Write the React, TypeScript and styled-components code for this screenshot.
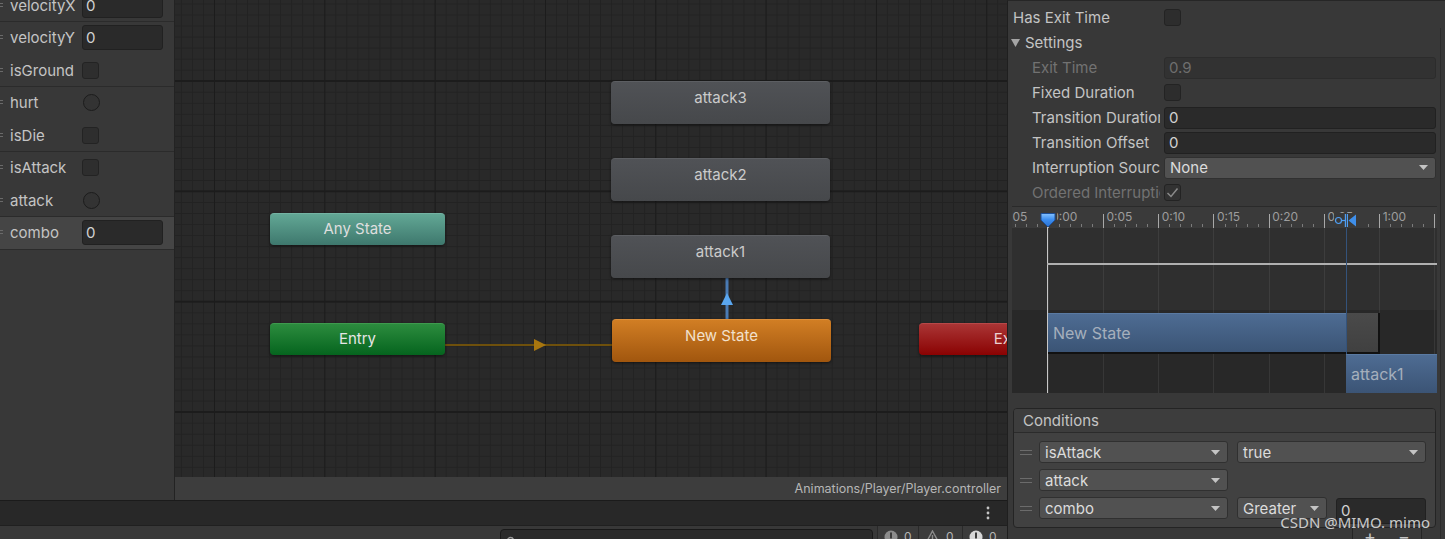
import React from 'react';
import styled, { createGlobalStyle } from 'styled-components';

const GlobalStyle = createGlobalStyle`
  html, body { margin: 0; padding: 0; background: #282828; overflow: hidden; }
  body { font-family: Inter, "Noto Sans", sans-serif; }
  * { box-sizing: border-box; }
`;

const Root = styled.div`
  display: flex;
  width: 1445px;
  height: 539px;
  overflow: hidden;
  font-family: Inter, "Noto Sans", sans-serif;
  font-size: 15px;
  color: #c4c4c4;
`;

const MainColumn = styled.div`
  display: flex;
  flex-direction: column;
  width: 1007px;
  flex-shrink: 0;
`;

const Workspace = styled.div`
  display: flex;
  height: 500px;
  flex-shrink: 0;
`;

/* ---------- parameters panel ---------- */
const ParamPanel = styled.div`
  width: 175px;
  flex-shrink: 0;
  background: #383838;
  border-right: 1px solid #232323;
  overflow: hidden;
`;

const ParamList = styled.div`
  margin-top: -10.5px;
`;

const ParamRow = styled.div<{ $sep?: boolean; $selected?: boolean }>`
  display: flex;
  align-items: center;
  height: 32.5px;
  border-bottom: 1px solid ${(p) => (p.$sep ? '#2b2b2b' : 'transparent')};
  background: ${(p) => (p.$selected ? '#454545' : 'transparent')};
`;

const RowGrip = styled.span`
  width: 3px;
  height: 4px;
  align-self: flex-start;
  margin-top: 13px;
  margin-right: 7px;
  border-top: 1px solid #6a6a6a;
  border-bottom: 1px solid #6a6a6a;
  flex-shrink: 0;
`;

const ParamLabel = styled.span`
  width: 72px;
  flex-shrink: 0;
  white-space: nowrap;
  overflow: hidden;
  color: #c4c4c4;
`;

const ParamField = styled.div`
  width: 81px;
  height: 25px;
  background: #2a2a2a;
  border: 1px solid #212121;
  border-radius: 3px;
  padding-left: 3px;
  display: flex;
  align-items: center;
  color: #d2d2d2;
`;

const ParamCheck = styled.div`
  width: 17px;
  height: 17px;
  background: #2e2e2e;
  border: 1px solid #232323;
  border-radius: 3px;
`;

const ParamTrigger = styled.div`
  width: 17px;
  height: 17px;
  margin-left: 1px;
  border-radius: 50%;
  background: #333333;
  border: 1px solid #1c1c1c;
`;

/* ---------- graph ---------- */
const GraphArea = styled.div`
  flex: 1;
  display: flex;
  flex-direction: column;
  min-width: 0;
`;

const GraphCanvas = styled.div`
  position: relative;
  flex: 1;
  overflow: hidden;
  background-color: #292929;
  background-image:
    linear-gradient(to right, #1c1c1c 0, #1c1c1c 1px, transparent 1px),
    linear-gradient(to bottom, #1c1c1c 0, #1c1c1c 2px, transparent 2px),
    linear-gradient(to right, #222222 0, #222222 1px, transparent 1px),
    linear-gradient(to bottom, #222222 0, #222222 1px, transparent 1px);
  background-size: 110.33px 110.33px, 110.33px 110.33px, 11.033px 11.033px, 11.033px 11.033px;
  background-position: 39px 80px, 39px 80px, 5.9px 3.5px, 5.9px 3.5px;
`;

const GraphLinks = styled.svg`
  position: absolute;
  left: 0;
  top: 0;
  pointer-events: none;
`;

type Skin = 'any' | 'entry' | 'plain' | 'default' | 'exit';
const skins: Record<Skin, { top: string; bottom: string; text: string; edge: string }> = {
  any: { top: '#62a795', bottom: '#3e786d', text: '#dedede', edge: '#74b3a3' },
  entry: { top: '#2c8c3e', bottom: '#05641e', text: '#e6e6e6', edge: '#3e9a4e' },
  plain: { top: '#505256', bottom: '#46484b', text: '#cbcbcb', edge: '#5c5e62' },
  default: { top: '#d17e24', bottom: '#a1560e', text: '#f2e0cc', edge: '#dc8e3a' },
  exit: { top: '#aa3535', bottom: '#8a0202', text: '#ecd0d0', edge: '#b84848' },
};

const StateNode = styled.div<{ $skin: Skin; $x: number; $y: number; $w: number; $h: number }>`
  position: absolute;
  left: ${(p) => p.$x}px;
  top: ${(p) => p.$y}px;
  width: ${(p) => p.$w}px;
  height: ${(p) => p.$h}px;
  padding-top: ${(p) => (p.$h > 36 ? 6 : 5)}px;
  line-height: 20px;
  text-align: center;
  font-size: 15px;
  white-space: nowrap;
  border-radius: 4px;
  color: ${(p) => skins[p.$skin].text};
  background: linear-gradient(${(p) => skins[p.$skin].top}, ${(p) => skins[p.$skin].bottom});
  border-top: 1px solid ${(p) => skins[p.$skin].edge};
  box-shadow: 0 1px 3px rgba(0, 0, 0, 0.55);
`;

const GraphFooter = styled.div`
  height: 23px;
  flex-shrink: 0;
  background: #3d3d3d;
  display: flex;
  align-items: center;
  justify-content: flex-end;
  padding-right: 6px;
  font-size: 12.5px;
  color: #b6b6b6;
`;

/* ---------- console strips ---------- */
const ConsoleToolbar = styled.div`
  height: 25px;
  flex-shrink: 0;
  background: #282828;
  border-top: 1px solid #1b1b1b;
  display: flex;
  align-items: center;
  justify-content: flex-end;
  padding-right: 17px;
`;

const ConsoleBar = styled.div`
  flex: 1;
  background: #383838;
  border-top: 1px solid #202020;
  display: flex;
  justify-content: flex-end;
  overflow: hidden;
`;

const SearchField = styled.div`
  width: 373px;
  height: 22px;
  margin-top: 3px;
  margin-right: 4px;
  background: #2a2a2a;
  border: 1px solid #191919;
  border-radius: 4px;
  padding: 2px 0 0 5px;
`;

const Counter = styled.div<{ $w: number }>`
  width: ${(p) => p.$w}px;
  display: flex;
  align-items: flex-start;
  gap: 6px;
  padding: 4px 0 0 6px;
  border-left: 1px solid #2a2a2a;
  background: #3b3b3b;
  font-size: 12px;
  line-height: 14px;
  color: #b4b4b4;
`;

/* ---------- inspector ---------- */
const Inspector = styled.div`
  position: relative;
  flex: 1;
  display: flex;
  background: #383838;
  border-left: 1px solid #1f1f1f;
  border-top: 1px solid #262626;
  overflow: hidden;
`;

const InspectorContent = styled.div`
  width: 428px;
  flex-shrink: 0;
  padding: 4px 0 0 5px;
  display: flex;
  flex-direction: column;
`;

const ScrollTrack = styled.div`
  flex: 1;
  padding: 27px 0 0 4px;
`;

const ScrollLine = styled.div`
  width: 1px;
  height: 100%;
  background: #2c2c2c;
`;

const PropRow = styled.div<{ $indent?: boolean }>`
  display: flex;
  align-items: center;
  height: 25px;
  flex-shrink: 0;
  padding-left: ${(p) => (p.$indent ? 19 : 0)}px;
`;

const PropLabel = styled.div<{ $indent?: boolean; $disabled?: boolean }>`
  width: ${(p) => (p.$indent ? 128 : 147)}px;
  margin-right: 4px;
  flex-shrink: 0;
  white-space: nowrap;
  overflow: hidden;
  color: ${(p) => (p.$disabled ? '#727272' : '#c4c4c4')};
`;

const Foldout = styled.div`
  display: flex;
  align-items: center;
  gap: 5px;
  margin-left: -2px;
  color: #c4c4c4;
`;

const TextField = styled.div<{ $disabled?: boolean }>`
  flex: 1;
  height: 22px;
  display: flex;
  align-items: center;
  padding-left: 4px;
  border-radius: 3px;
  background: ${(p) => (p.$disabled ? '#323232' : '#2a2a2a')};
  border: 1px solid ${(p) => (p.$disabled ? '#2c2c2c' : '#212121')};
  color: ${(p) => (p.$disabled ? '#6e6e6e' : '#d2d2d2')};
`;

const CheckBox = styled.div<{ $disabled?: boolean }>`
  width: 17px;
  height: 17px;
  display: flex;
  align-items: center;
  justify-content: center;
  border-radius: 3px;
  background: ${(p) => (p.$disabled ? '#323232' : '#2d2d2d')};
  border: 1px solid #232323;
`;

const Dropdown = styled.div<{ $w?: number }>`
  ${(p) => (p.$w ? `width: ${p.$w}px;` : 'flex: 1;')}
  flex-shrink: 0;
  height: 22px;
  display: flex;
  align-items: center;
  justify-content: space-between;
  padding: 0 7px 0 5px;
  border-radius: 3px;
  background: #515151;
  border: 1px solid #303030;
  color: #dcdcdc;
`;

/* ---------- timeline ---------- */
const Timeline = styled.div`
  position: relative;
  height: 187px;
  margin: 1px -1px 0 -1px;
  border-top: 1px solid #2a2a2a;
  display: flex;
  flex-direction: column;
  overflow: hidden;
  flex-shrink: 0;
`;

const RulerBand = styled.div`
  height: 21px;
  background: #3a3a3a;
`;

const UpperTrack = styled.div`
  height: 82px;
  background: #2f2f2f;
`;

const LowerTrack = styled.div`
  flex: 1;
  background: #282828;
`;

const TimeOverlay = styled.svg`
  position: absolute;
  left: 0;
  top: 0;
`;

const RulerLabel = styled.span<{ $x: number }>`
  position: absolute;
  left: ${(p) => p.$x}px;
  top: 2px;
  font-size: 12px;
  line-height: 16px;
  color: #9d9d9d;
  white-space: nowrap;
`;

const MarkerSvg = styled.svg<{ $x: number; $y: number }>`
  position: absolute;
  left: ${(p) => p.$x}px;
  top: ${(p) => p.$y}px;
`;

const TimeLine = styled.div<{ $x: number; $y: number; $w: number; $h: number; $c: string }>`
  position: absolute;
  left: ${(p) => p.$x}px;
  top: ${(p) => p.$y}px;
  width: ${(p) => p.$w}px;
  height: ${(p) => p.$h}px;
  background: ${(p) => p.$c};
`;

const ClipBar = styled.div<{ $x: number; $y: number; $w: number }>`
  position: absolute;
  left: ${(p) => p.$x}px;
  top: ${(p) => p.$y}px;
  width: ${(p) => p.$w}px;
  height: 39px;
  display: flex;
  align-items: center;
  padding-left: 5px;
  font-size: 16px;
  color: #a5afbc;
  white-space: nowrap;
  background: linear-gradient(#4e6c93, #3b5475);
  border-top: 1px solid #5a7aa2;
`;

const BlendTail = styled.div<{ $x: number; $y: number; $w: number }>`
  position: absolute;
  left: ${(p) => p.$x}px;
  top: ${(p) => p.$y}px;
  width: ${(p) => p.$w}px;
  height: 41px;
  background: linear-gradient(#4a4a4a, #404040);
  border-right: 2px solid #111111;
  border-bottom: 2px solid #111111;
`;

/* ---------- conditions ---------- */
const ConditionsBlock = styled.div`
  margin-top: 15px;
  display: flex;
  flex-direction: column;
`;

const CondBox = styled.div`
  border: 1px solid #242424;
  border-radius: 4px;
  background: #414141;
  overflow: hidden;
`;

const CondHeader = styled.div`
  height: 24px;
  display: flex;
  align-items: center;
  padding-left: 9px;
  background: #3d3d3d;
  border-bottom: 1px solid #2b2b2b;
  color: #c4c4c4;
`;

const CondBody = styled.div`
  padding: 5px 9px 5px 6px;
  display: flex;
  flex-direction: column;
`;

const CondRow = styled.div`
  display: flex;
  align-items: center;
  height: 28px;
`;

const CondGrip = styled.span`
  width: 12px;
  height: 5px;
  margin-right: 7px;
  border-top: 1px solid #6b6b6b;
  border-bottom: 1px solid #6b6b6b;
  flex-shrink: 0;
`;

const CondGap = styled.span`
  width: 9px;
  flex-shrink: 0;
`;

const NumberField = styled.div`
  width: 90px;
  height: 26px;
  align-self: flex-start;
  margin-top: 4px;
  background: #2a2a2a;
  border: 1px solid #212121;
  border-radius: 3px;
  padding: 2px 0 0 4px;
  line-height: 20px;
  color: #d2d2d2;
`;

const ListFooter = styled.div`
  align-self: flex-end;
  width: 70px;
  height: 14px;
  margin-right: 14px;
  display: flex;
  justify-content: space-around;
  border: 1px solid #242424;
  border-top: none;
  background: #3a3a3a;
  font-size: 18px;
  line-height: 14px;
  color: #c4c4c4;
  overflow: hidden;
  padding-top: 2px;
`;

const Watermark = styled.div`
  position: absolute;
  right: 15px;
  bottom: 8px;
  font-family: "Noto Sans", "Noto Sans CJK SC", sans-serif;
  font-size: 15px;
  line-height: 18px;
  color: rgba(225, 225, 225, 0.88);
  white-space: nowrap;
  pointer-events: none;
`;

/* ---------- small drawings ---------- */
const Arrow = () => (
  <svg width="9" height="5" viewBox="0 0 9 5">
    <path d="M0 0 H9 L4.5 5 Z" fill="#c4c4c4" />
  </svg>
);

const FoldTriangle = () => (
  <svg width="9" height="8" viewBox="0 0 9 8">
    <path d="M0 0 H9 L4.5 8 Z" fill="#a5a5a5" />
  </svg>
);

const Tick = () => (
  <svg width="13" height="11" viewBox="0 0 13 11">
    <path d="M1.5 6 L5 9.5 L11.5 1.5" fill="none" stroke="#8a8a8a" strokeWidth="1.5" />
  </svg>
);

const Kebab = () => (
  <svg width="4" height="14" viewBox="0 0 4 14">
    <circle cx="2" cy="2" r="1.4" fill="#c4c4c4" />
    <circle cx="2" cy="7" r="1.4" fill="#c4c4c4" />
    <circle cx="2" cy="12" r="1.4" fill="#c4c4c4" />
  </svg>
);

const SearchGlyph = () => (
  <svg width="11" height="11" viewBox="0 0 11 11">
    <circle cx="4.5" cy="4.5" r="3" fill="none" stroke="#9a9a9a" strokeWidth="1.3" />
    <path d="M7 7 L10 10" stroke="#9a9a9a" strokeWidth="1.3" />
  </svg>
);

const InfoGlyph = () => (
  <svg width="14" height="14" viewBox="0 0 14 14">
    <circle cx="7" cy="7" r="6.5" fill="#8c8c8c" />
    <rect x="6" y="2.5" width="2" height="6" fill="#3b3b3b" />
  </svg>
);

const WarnGlyph = () => (
  <svg width="15" height="14" viewBox="0 0 15 14">
    <path d="M7.5 1 L14 13 H1 Z" fill="none" stroke="#8c8c8c" strokeWidth="1.4" />
    <rect x="6.8" y="5" width="1.4" height="4" fill="#8c8c8c" />
  </svg>
);

const ErrorGlyph = () => (
  <svg width="14" height="14" viewBox="0 0 14 14">
    <circle cx="7" cy="7" r="6.5" fill="#d6d6d6" />
    <rect x="6" y="2.5" width="2" height="6" fill="#3b3b3b" />
  </svg>
);

/* ---------- data ---------- */
type ParamKind = 'float' | 'int' | 'bool' | 'trigger';
const params: { name: string; kind: ParamKind; value?: string; sep?: boolean; selected?: boolean }[] = [
  { name: 'velocityX', kind: 'float', value: '0', sep: true },
  { name: 'velocityY', kind: 'float', value: '0' },
  { name: 'isGround', kind: 'bool', sep: true },
  { name: 'hurt', kind: 'trigger' },
  { name: 'isDie', kind: 'bool', sep: true },
  { name: 'isAttack', kind: 'bool' },
  { name: 'attack', kind: 'trigger', sep: true },
  { name: 'combo', kind: 'int', value: '0', sep: true, selected: true },
];

const nodes: { label: string; skin: Skin; x: number; y: number; w: number; h: number }[] = [
  { label: 'Any State', skin: 'any', x: 95, y: 213, w: 175, h: 32 },
  { label: 'Entry', skin: 'entry', x: 95, y: 323, w: 175, h: 32 },
  { label: 'attack3', skin: 'plain', x: 436, y: 81, w: 219, h: 43 },
  { label: 'attack2', skin: 'plain', x: 436, y: 158, w: 219, h: 43 },
  { label: 'attack1', skin: 'plain', x: 436, y: 235, w: 219, h: 43 },
  { label: 'New State', skin: 'default', x: 437, y: 319, w: 219, h: 43 },
  { label: 'Exit', skin: 'exit', x: 744, y: 323, w: 175, h: 32 },
];

const TICK0 = 35.7;
const STEP = 55.25;
const rulerLabels = ['-0:05', '0:00', '0:05', '0:10', '0:15', '0:20', '0:25', '1:00', '1:05'];

function TimelineView() {
  const majors: number[] = [];
  const minors: number[] = [];
  for (let k = -1; k <= 7; k++) {
    const x = TICK0 + STEP * k;
    majors.push(x);
    for (let j = 1; j < 5; j++) minors.push(x + (STEP / 5) * j);
  }
  return (
    <Timeline>
      <RulerBand />
      <UpperTrack />
      <LowerTrack />
      <TimeOverlay width="425" height="186" viewBox="0 0 425 186" shapeRendering="crispEdges">
        {majors.map((x) => (
          <line key={'g' + x} x1={Math.round(x) + 0.5} x2={Math.round(x) + 0.5} y1="21" y2="186" stroke="rgba(255,255,255,0.07)" />
        ))}
        {majors.map((x) => (
          <line key={'m' + x} x1={Math.round(x) + 0.5} x2={Math.round(x) + 0.5} y1="7" y2="21" stroke="#a8a8a8" />
        ))}
        {minors.map((x) => (
          <line key={'n' + x} x1={Math.round(x) + 0.5} x2={Math.round(x) + 0.5} y1="17" y2="20" stroke="#7c7c7c" />
        ))}
      </TimeOverlay>
      {rulerLabels.map((t, i) => (
        <RulerLabel key={t} $x={TICK0 + STEP * (i - 1) + 3.5}>
          {t}
        </RulerLabel>
      ))}
      <TimeLine $x={35} $y={15} $w={1} $h={171} $c="#c8c8c8" />
      <TimeLine $x={35} $y={56} $w={390} $h={2} $c="#b0b0b0" />
      <BlendTail $x={334} $y={106} $w={34} />
      <ClipBar $x={36} $y={106} $w={298}>New State</ClipBar>
      <TimeLine $x={36} $y={145} $w={300} $h={2} $c="#111111" />
      <ClipBar $x={334} $y={147} $w={91}>attack1</ClipBar>
      <TimeLine $x={334} $y={21} $w={1} $h={126} $c="#34537b" />
      <MarkerSvg $x={27} $y={5} width="18" height="17" viewBox="0 0 18 17">
        <defs>
          <linearGradient id="mk" x1="0" y1="0" x2="0" y2="1">
            <stop offset="0" stopColor="#86c2ff" />
            <stop offset="0.45" stopColor="#3d8ef0" />
            <stop offset="1" stopColor="#2a70d0" />
          </linearGradient>
        </defs>
        <rect x="0" y="0" width="18" height="15" fill="#3a3a3a" />
        <path d="M2 1.5 H16 V8 L9 15 L2 8 Z" fill="url(#mk)" stroke="#1d4f98" strokeWidth="1" />
      </MarkerSvg>
      <MarkerSvg $x={322} $y={6} width="26" height="14" viewBox="0 0 26 14">
        <rect x="0" y="0" width="26" height="14" fill="#3a3a3a" />
        <circle cx="4.5" cy="7.5" r="3" fill="none" stroke="#4f9ef2" strokeWidth="1.2" />
        <line x1="7.5" y1="7.5" x2="11" y2="7.5" stroke="#4f9ef2" strokeWidth="1.2" />
        <line x1="11.5" y1="1" x2="11.5" y2="14" stroke="#4f9ef2" strokeWidth="1.4" />
        <line x1="13.5" y1="1" x2="13.5" y2="14" stroke="#4f9ef2" strokeWidth="1" />
        <path d="M14.5 7.5 L22 1.5 V13.5 Z" fill="#3f8fea" />
      </MarkerSvg>
    </Timeline>
  );
}

export default function App() {
  return (
    <Root>
      <GlobalStyle />
      <MainColumn>
        <Workspace>
          <ParamPanel>
            <ParamList>
              {params.map((p) => (
                <ParamRow key={p.name} $sep={p.sep} $selected={p.selected}>
                  <RowGrip />
                  <ParamLabel>{p.name}</ParamLabel>
                  {(p.kind === 'float' || p.kind === 'int') && <ParamField>{p.value}</ParamField>}
                  {p.kind === 'bool' && <ParamCheck />}
                  {p.kind === 'trigger' && <ParamTrigger />}
                </ParamRow>
              ))}
            </ParamList>
          </ParamPanel>
          <GraphArea>
            <GraphCanvas>
              <GraphLinks width="832" height="477" viewBox="0 0 832 477">
                <line x1="270" y1="345" x2="437" y2="345" stroke="#6e500c" strokeWidth="2" />
                <path d="M359 339 L371 345 L359 351 Z" fill="#a8760f" />
                <line x1="552" y1="278" x2="552" y2="319" stroke="#4a7bb4" strokeWidth="3" />
                <path d="M546 305 L552 293 L558 305 Z" fill="#5aa6ef" />
              </GraphLinks>
              {nodes.map((n) => (
                <StateNode key={n.label} $skin={n.skin} $x={n.x} $y={n.y} $w={n.w} $h={n.h}>
                  {n.label}
                </StateNode>
              ))}
            </GraphCanvas>
            <GraphFooter>Animations/Player/Player.controller</GraphFooter>
          </GraphArea>
        </Workspace>
        <ConsoleToolbar>
          <Kebab />
        </ConsoleToolbar>
        <ConsoleBar>
          <SearchField>
            <SearchGlyph />
          </SearchField>
          <Counter $w={41}>
            <InfoGlyph />
            <span>0</span>
          </Counter>
          <Counter $w={44}>
            <WarnGlyph />
            <span>0</span>
          </Counter>
          <Counter $w={45}>
            <ErrorGlyph />
            <span>0</span>
          </Counter>
        </ConsoleBar>
      </MainColumn>

      <Inspector>
        <InspectorContent>
          <PropRow>
            <PropLabel>Has Exit Time</PropLabel>
            <CheckBox />
          </PropRow>
          <PropRow>
            <Foldout>
              <FoldTriangle />
              <span>Settings</span>
            </Foldout>
          </PropRow>
          <PropRow $indent>
            <PropLabel $indent $disabled>Exit Time</PropLabel>
            <TextField $disabled>0.9</TextField>
          </PropRow>
          <PropRow $indent>
            <PropLabel $indent>Fixed Duration</PropLabel>
            <CheckBox />
          </PropRow>
          <PropRow $indent>
            <PropLabel $indent>Transition Duration (s)</PropLabel>
            <TextField>0</TextField>
          </PropRow>
          <PropRow $indent>
            <PropLabel $indent>Transition Offset</PropLabel>
            <TextField>0</TextField>
          </PropRow>
          <PropRow $indent>
            <PropLabel $indent>Interruption Source</PropLabel>
            <Dropdown>
              <span>None</span>
              <Arrow />
            </Dropdown>
          </PropRow>
          <PropRow $indent>
            <PropLabel $indent $disabled>Ordered Interruption</PropLabel>
            <CheckBox $disabled>
              <Tick />
            </CheckBox>
          </PropRow>

          <TimelineView />

          <ConditionsBlock>
            <CondBox>
              <CondHeader>Conditions</CondHeader>
              <CondBody>
                <CondRow>
                  <CondGrip />
                  <Dropdown $w={189}>
                    <span>isAttack</span>
                    <Arrow />
                  </Dropdown>
                  <CondGap />
                  <Dropdown $w={189}>
                    <span>true</span>
                    <Arrow />
                  </Dropdown>
                </CondRow>
                <CondRow>
                  <CondGrip />
                  <Dropdown $w={189}>
                    <span>attack</span>
                    <Arrow />
                  </Dropdown>
                </CondRow>
                <CondRow>
                  <CondGrip />
                  <Dropdown $w={189}>
                    <span>combo</span>
                    <Arrow />
                  </Dropdown>
                  <CondGap />
                  <Dropdown $w={90}>
                    <span>Greater</span>
                    <Arrow />
                  </Dropdown>
                  <CondGap />
                  <NumberField>0</NumberField>
                </CondRow>
              </CondBody>
            </CondBox>
            <ListFooter>
              <span>+</span>
              <span>−</span>
            </ListFooter>
          </ConditionsBlock>
        </InspectorContent>
        <ScrollTrack>
          <ScrollLine />
        </ScrollTrack>
        <Watermark>CSDN @MIMO. mimo</Watermark>
      </Inspector>
    </Root>
  );
}
